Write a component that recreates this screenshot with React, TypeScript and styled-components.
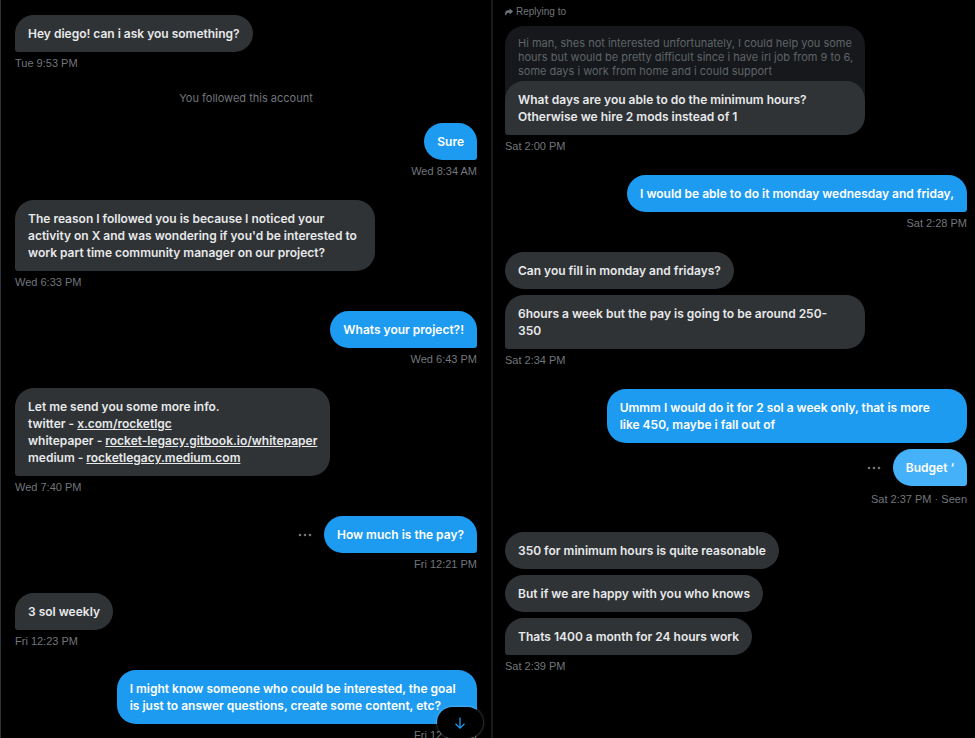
import React from "react";
import styled, { createGlobalStyle } from "styled-components";

const GlobalStyle = createGlobalStyle`
  * { box-sizing: border-box; }
  html { background: #000; }
  body {
    margin: 0;
    background: #000;
    color: #e7e9ea;
    font-family: Inter, "Liberation Sans", sans-serif;
    font-size: 12px;
    line-height: 17px;
  }
`;

const Page = styled.main`
  display: grid;
  grid-template-columns: minmax(0, 491fr) minmax(0, 484fr);
  height: 100vh;
  overflow: hidden;
`;

const Pane = styled.section<{ $side: "left" | "right" }>`
  position: relative;
  display: flex;
  flex-direction: column;
  overflow: hidden;
  border-left: ${(p) => (p.$side === "left" ? "1px solid #2f3336" : "2px solid #191b1f")};
  padding: ${(p) => (p.$side === "left" ? "15px 14px 0" : "5px 8px 0 12px")};
`;

const Group = styled.div<{ $mine?: boolean }>`
  display: flex;
  flex-direction: column;
  flex-shrink: 0;
  align-items: ${(p) => (p.$mine ? "flex-end" : "flex-start")};
  gap: 6px;
`;

const Row = styled.div<{ $mine?: boolean }>`
  display: flex;
  width: 100%;
  align-items: center;
  justify-content: ${(p) => (p.$mine ? "flex-end" : "flex-start")};
  gap: 12px;
`;

const Bubble = styled.div<{ $mine?: boolean; $tail?: boolean; $active?: boolean; $wide?: boolean }>`
  width: ${(p) => (p.$wide ? "78%" : "auto")};
  max-width: 78%;
  padding: 10px 13px;
  overflow-wrap: break-word;
  font-weight: 600;
  color: ${(p) => (p.$mine ? "#fff" : "#e7e9ea")};
  background: ${(p) => (p.$active ? "#45b1f8" : p.$mine ? "#1d9bf0" : "#2f3336")};
  border-radius: 19px;
  ${(p) => p.$tail && (p.$mine ? "border-bottom-right-radius: 3px;" : "border-bottom-left-radius: 3px;")}
`;

const Link = styled.a`
  color: inherit;
  text-decoration: underline;
`;

const Stamp = styled.time<{ $seen?: boolean }>`
  margin: ${(p) => (p.$seen ? "0 0 25px" : "-2px 0 21px")};
  font-family: "Liberation Sans", sans-serif;
  font-size: 11px;
  line-height: 15px;
  color: #71767b;
`;

const Notice = styled.p`
  margin: 0 0 18px;
  font-size: 11px;
  line-height: 13px;
  text-align: center;
  color: #71767b;
`;

const DotsButton = styled.button`
  display: flex;
  padding: 0;
  border: 0;
  background: none;
  color: #71767b;
  cursor: pointer;
`;

const ReplyLabel = styled.div`
  display: flex;
  align-items: center;
  gap: 3px;
  margin-bottom: 7px;
  font-family: "Liberation Sans", sans-serif;
  font-size: 10px;
  line-height: 14px;
  color: #71767b;
`;

const Quote = styled.blockquote`
  width: 78%;
  margin: 0 0 -19px;
  padding: 10px 8px 22px 13px;
  border-radius: 19px 19px 0 0;
  background: #16181c;
  color: #5f6468;
  font-size: 11px;
  line-height: 14px;
`;

const JumpButton = styled.button`
  position: absolute;
  right: 8px;
  bottom: 0;
  display: flex;
  align-items: center;
  justify-content: center;
  width: 46px;
  height: 31px;
  padding: 0;
  border: 0;
  border-radius: 16px;
  background: #000;
  color: #1d9bf0;
  box-shadow: 0 0 2px 1px rgba(255, 255, 255, 0.2);
  cursor: pointer;
`;

function Dots() {
  return (
    <DotsButton aria-label="More">
      <svg width="14" height="14" viewBox="0 0 14 14" fill="currentColor">
        <circle cx="2" cy="7" r="1.3" />
        <circle cx="7" cy="7" r="1.3" />
        <circle cx="12" cy="7" r="1.3" />
      </svg>
    </DotsButton>
  );
}

type Message = { content: React.ReactNode; dots?: boolean; active?: boolean; wide?: boolean };

function Thread({ mine, time, seen, messages }: {
  mine?: boolean;
  time: string;
  seen?: boolean;
  messages: Message[];
}) {
  return (
    <Group $mine={mine}>
      {messages.map((m, i) => (
        <Row key={i} $mine={mine}>
          {m.dots && <Dots />}
          <Bubble $mine={mine} $active={m.active} $wide={m.wide} $tail={i === messages.length - 1}>
            {m.content}
          </Bubble>
        </Row>
      ))}
      <Stamp $seen={seen}>{time}</Stamp>
    </Group>
  );
}

export default function App() {
  return (
    <>
      <GlobalStyle />
      <Page>
        <Pane $side="left">
          <Thread time="Tue 9:53 PM" messages={[{ content: "Hey diego! can i ask you something?" }]} />
          <Notice>You followed this account</Notice>
          <Thread mine time="Wed 8:34 AM" messages={[{ content: "Sure" }]} />
          <Thread
            time="Wed 6:33 PM"
            messages={[{
              content:
                "The reason I followed you is because I noticed your activity on X and was wondering if you'd be interested to work part time community manager on our project?",
            }]}
          />
          <Thread mine time="Wed 6:43 PM" messages={[{ content: "Whats your project?!" }]} />
          <Thread
            time="Wed 7:40 PM"
            messages={[{
              content: (
                <>
                  Let me send you some more info.
                  <br />
                  twitter - <Link href="https://x.com/rocketlgc">x.com/rocketlgc</Link>
                  <br />
                  whitepaper -{" "}
                  <Link href="https://rocket-legacy.gitbook.io/whitepaper">rocket-legacy.gitbook.io/whitepaper</Link>
                  <br />
                  medium - <Link href="https://rocketlegacy.medium.com">rocketlegacy.medium.com</Link>
                </>
              ),
            }]}
          />
          <Thread mine time="Fri 12:21 PM" messages={[{ content: "How much is the pay?", dots: true }]} />
          <Thread time="Fri 12:23 PM" messages={[{ content: "3 sol weekly" }]} />
          <Thread
            mine
            time="Fri 12:24 PM"
            messages={[{
              content:
                "I might know someone who could be interested, the goal is just to answer questions, create some content, etc?",
            }]}
          />
          <JumpButton aria-label="Scroll to bottom">
            <svg width="14" height="14" viewBox="0 0 14 14" fill="none" stroke="currentColor" strokeWidth="1.3">
              <path d="M7 1.5V12M2.5 7.7L7 12.2L11.5 7.7" />
            </svg>
          </JumpButton>
        </Pane>

        <Pane $side="right">
          <ReplyLabel>
            <svg width="8" height="8" viewBox="0 0 8 8" fill="currentColor">
              <path d="M4.6 0.4L8 3.5L4.6 6.6V4.8H3.4C2.2 4.8 1.5 5.5 1.3 7.2H0.2V5.6C0.2 3.5 1.4 2.3 3.4 2.3H4.6Z" />
            </svg>
            Replying to
          </ReplyLabel>
          <Quote>
            Hi man, shes not interested unfortunately, I could help you some hours but would be pretty difficult since i
            have irl job from 9 to 6, some days i work from home and i could support
          </Quote>
          <Thread
            time="Sat 2:00 PM"
            messages={[{
              content: "What days are you able to do the minimum hours? Otherwise we hire 2 mods instead of 1",
            }]}
          />
          <Thread
            mine
            time="Sat 2:28 PM"
            messages={[{ content: "I would be able to do it monday wednesday and friday," }]}
          />
          <Thread
            time="Sat 2:34 PM"
            messages={[
              { content: "Can you fill in monday and fridays?" },
              { wide: true, content: <>6hours a week but the pay is going to be around 250-<br />350</> },
            ]}
          />
          <Thread
            mine
            seen
            time="Sat 2:37 PM · Seen"
            messages={[
              {
                wide: true,
                content: <>Ummm I would do it for 2 sol a week only, that is more<br />like 450, maybe i fall out of</>,
              },
              { content: "Budget ‘", dots: true, active: true },
            ]}
          />
          <Thread
            time="Sat 2:39 PM"
            messages={[
              { content: "350 for minimum hours is quite reasonable" },
              { content: "But if we are happy with you who knows" },
              { content: "Thats 1400 a month for 24 hours work" },
            ]}
          />
        </Pane>
      </Page>
    </>
  );
}
